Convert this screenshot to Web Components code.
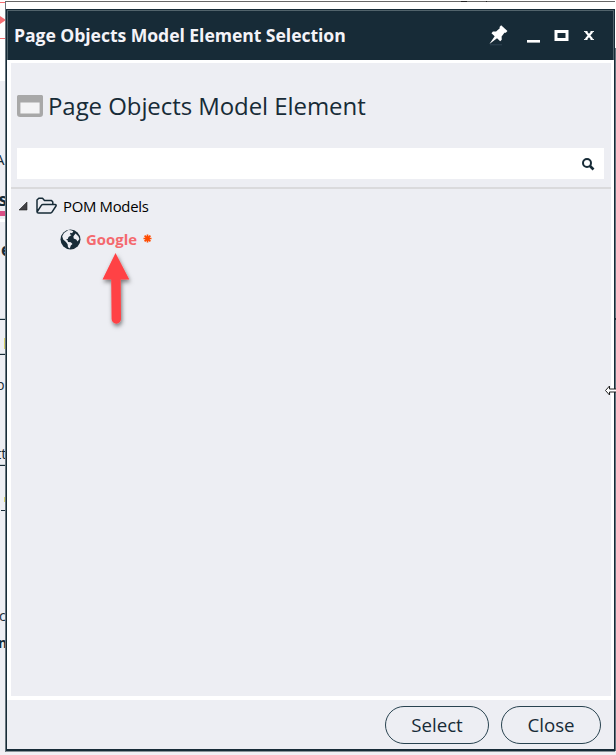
<!DOCTYPE html>
<html lang="en"><head><meta charset="utf-8"><title>Page Objects Model Element Selection</title>
<style>html,body{margin:0;width:616px;height:755px;overflow:hidden;background:#edeef3}body{font-family:"Open Sans","Noto Sans",sans-serif;color:#172b37}</style></head>
<body><pom-screen></pom-screen>
<script>
const define=(name,html)=>customElements.define(name,class extends HTMLElement{
  constructor(){super();const t=document.createElement('template');t.innerHTML=html;this.attachShadow({mode:'open'}).append(t.content.cloneNode(true));}
});
define('back-page',`<style>:host{display:block;width:616px;height:755px;overflow:hidden}svg{display:block;font-family:"Open Sans",sans-serif}</style>
<svg width="616" height="755"><rect width="616" height="81" fill="#fff"/>
<path d="M0 2.5H5M0 38.5H5" stroke="#f56f73"/><path d="M0 16L6 20L0 24Z" fill="#f56f73"/>
<g fill="#172b37"><text x="-5" y="165" font-size="15">A</text><text x="-1.5" y="206" font-size="17" font-weight="700">s</text><text x="1" y="256" font-size="17" font-weight="700">e</text>
<text x="-4" y="390" font-size="14">p</text><text x="-4" y="459" font-size="15">tt</text><text x="-1" y="621" font-size="14">c</text><text x="-2" y="648" font-size="14" font-weight="700">n</text></g>
<rect y="211" width="5" height="5" fill="#d94f85"/><rect y="219" width="5" height="3" fill="#fff"/>
<path d="M0 319.5H5M0 354.5H5M0 465.5H5M1 510.5H5" stroke="#172b37"/><path d="M0 318.5H5M0 353.5H5M0 464.5H5" stroke="#c5ccd1"/>
<path d="M4.5 338V349M4.5 497V502" stroke="#d8d36d"/>
<rect x="615" width="1" height="755" fill="#62737c"/><rect x="615" width="1" height="48" fill="#fff"/><rect x="615" y="318" width="1" height="2" fill="#172b37"/>
<rect y="751" width="616" height="4" fill="#f2eff4"/></svg>`);
define('window-controls',`<style>:host{display:block;height:24px}svg{display:block}</style>
<svg width="114" height="24" fill="#fff"><g transform="translate(13.3 10.6) rotate(43)"><path d="M-4.3-8.8H4.3V-6.4L3.2-5.6L3.8-.8L6 1.4V3.6H1.6L0 13L-1.6 3.6H-6V1.4L-3.8-.8L-3.2-5.6L-4.3-6.4Z"/></g>
<path d="M5 20.8H17" stroke="#35495a" stroke-width=".8"/><g transform="translate(4)"><rect x="38" y="16" width="13" height="2.6"/><path d="M67 7.5H78V15.5H67Z" fill="none" stroke="#fff" stroke-width="3"/><path d="M96.8 7.7L103.2 15.3M103.2 7.7L96.8 15.3" stroke="#fff" stroke-width="2.1"/><path d="M95 7.5H98.5M101.5 7.5H105M95 15.5H98.5M101.5 15.5H105" stroke="#fff" stroke-width=".9"/></g></svg>`);
define('title-bar',`<style>:host{display:flex;box-sizing:border-box;height:51px;background:#172b37;border-top:1px solid #172b37;box-shadow:inset 1px 1px #52646c,inset -1px 0 #52646c;padding:1px 15px 0 7px;align-items:center;justify-content:space-between;color:#f4f3f8;font-weight:700;font-size:17.6px;line-height:24px;white-space:nowrap}
span{letter-spacing:-.06px;padding-bottom:1px}</style><span><slot></slot></span><window-controls></window-controls>`);
define('panel-heading',`<style>:host{display:flex;height:85px;padding-left:6px;box-sizing:border-box;align-items:center;font-size:24px;letter-spacing:-.07px;white-space:nowrap}svg{margin-right:5px}</style>
<svg width="26" height="24"><rect x="1.7" y="2.7" width="22.6" height="18.6" rx="1.5" fill="#f4f4f5" stroke="#a8a8a8" stroke-width="3.4"/><rect y="1" width="26" height="7.5" rx="1.5" fill="#a8a8a8"/></svg><span><slot></slot></span>`);
define('search-box',`<style>:host{display:flex;justify-content:flex-end;align-items:center;box-sizing:border-box;height:31px;background:#fff;margin:0 7px 0 6px;padding-right:9px}</style>
<svg width="14" height="14" fill="none" stroke="#172b37"><circle cx="6" cy="6" r="4" stroke-width="2"/><path d="M9 9L12.5 12.5" stroke-width="2.6"/></svg>`);
define('tree-row',`<style>:host{display:flex;align-items:center;height:33px;white-space:nowrap}::slotted(svg){display:block;flex:none}</style><slot></slot>`);
define('model-tree',`<style>:host{display:block;border-top:2px solid #dadadc;margin-top:8px;padding:1px 0 0 8px;font-size:15px}svg{flex:none}.label{color:#000;letter-spacing:-.3px;font-size:14.9px;margin-top:-1px}.child{padding-left:41px}.google{color:#f4696e;font-weight:700;font-size:14.9px}.star{margin-left:6px}</style>
<tree-row><svg width="17" height="20"><path d="M8 5V13H0Z" fill="#414145" stroke="#222" stroke-width=".6"/></svg><svg width="21" height="18" fill="none" stroke="#172b37" stroke-width="1.5" style="margin:-2px 6px 0 0"><path d="M1 14.8V3L2.8 1.2H6.5L8.5 3.5H15.5L16.8 5V7M1 14.8Q1 16 2.5 16H14.7Q15.5 16 16 15.2L20 9Q20.6 7.4 19 7.4H7Q6 7.4 5.5 8.2L1 15" stroke-linejoin="round"/></svg><span class="label">POM Models</span></tree-row>
<tree-row class="child"><svg width="21" height="21" style="margin-top:-1px"><circle cx="10.5" cy="10.5" r="10" fill="#172b37"/><path d="M8.3 1L11 1.2L13.3 2.3L12.1 4.2L10.5 3.8L9.8 5.2L11.5 6L8.5 8L7.8 10L6 10.3L7.7 11.4L8 13.1L10.8 13.3L12.5 15L10.8 16.6L9.8 19.5L8 18.2L7.6 15.2L6 13L3.2 10.4L2.2 7.2L4 4ZM15.6 4.5L18.5 7.4L19.4 10L17.6 12.4L16.2 10.4L13.7 9.4L13.4 7.3Z" fill="#edeef3"/></svg><span class="google" style="margin:-1px 0 0 5px">Google</span><svg class="star" width="9" height="9" style="margin-top:-3px"><path d="M4.5 .5V8.5M.5 4.5H8.5M1.6 1.6L7.4 7.4M7.4 1.6L1.6 7.4" stroke="#ff4b00" stroke-width="1.7"/></svg></tree-row>`);
define('dialog-button',`<style>:host{display:block}button{box-sizing:border-box;width:100%;height:38px;border:1.5px solid #294350;border-radius:19px;background:#edeef3;color:#172b37;font:18.7px/30px "Open Sans",sans-serif;padding:0 0 1px}</style><button><slot></slot></button>`);
define('dialog-window',`<style>:host{display:block;box-sizing:border-box;width:610px;height:752px;margin-left:5px;padding-top:1px}
.outer{box-sizing:border-box;height:751px;border-top:1px solid #666;border-left:1px solid #68757d;background:#fff;padding-top:7px}
.shell{box-sizing:border-box;height:742px;border:solid #172b37;border-width:0 1px 2px;background:#edeef3;box-shadow:0 1px #8a9499}
.content{box-sizing:border-box;height:640px;border:solid #fff;border-width:3px 3px 4px 4px;background:#edeef3}
footer{display:flex;justify-content:flex-end;padding:6px 13px 0 0;gap:12px}footer :first-child{width:104px}footer :last-child{width:100px}</style>
<div class="outer"><div class="shell"><title-bar>Page Objects Model Element Selection</title-bar><div class="content"><panel-heading>Page Objects Model Element</panel-heading><search-box></search-box><model-tree></model-tree></div><footer><dialog-button>Select</dialog-button><dialog-button>Close</dialog-button></footer></div></div>`);
define('pointer-marks',`<style>:host{display:block;pointer-events:none}svg{display:block}</style><svg width="616" height="755"><defs><filter id="s" x="-50%" y="-20%" width="220%" height="150%"><feDropShadow dx="1" dy="2.5" stdDeviation="2" flood-opacity=".5"/></filter></defs>
<path filter="url(#s)" d="M115.5 253L129.3 279.5H120.7L121 319A4.7 4.7 0 0 1 111.6 319L111.2 279.5H102.5Z" fill="#ff4245"/>
<path d="M605.5 390.5L609.5 386V389H617V392H609.5V395Z" fill="#fff" stroke="#222"/><path d="M461 1.5H467M486 1.5H487" stroke="#222"/></svg>`);
define('pom-screen',`<style>:host{display:grid;width:616px;height:755px}back-page,dialog-window,pointer-marks{grid-area:1/1}</style><back-page></back-page><dialog-window></dialog-window><pointer-marks></pointer-marks>`);
</script></body></html>
